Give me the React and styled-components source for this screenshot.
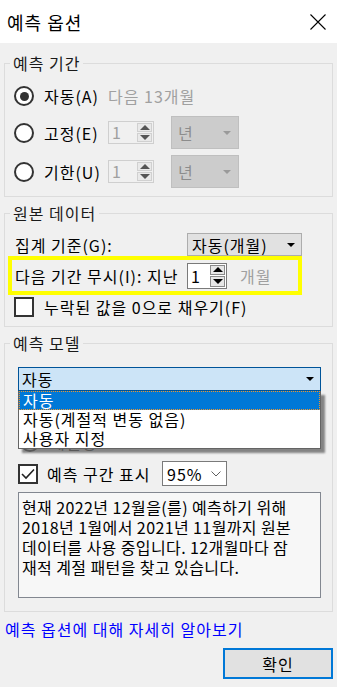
import React from 'react';
import styled, { createGlobalStyle } from 'styled-components';

const GlobalStyle = createGlobalStyle`
  html, body {
    margin: 0;
    padding: 0;
    background: #f0f0f0;
  }
  body {
    font-family: "Noto Sans CJK KR", "Noto Sans", sans-serif;
    font-size: 16px;
    letter-spacing: 1px;
    color: #000;
  }
  * {
    box-sizing: border-box;
  }
`;

const Window = styled.div`
  width: 337px;
  height: 687px;
  background: #f0f0f0;
  overflow: hidden;
`;

const TitleBar = styled.div`
  height: 43px;
  background: #fff;
  display: flex;
  align-items: center;
  justify-content: space-between;
  padding: 0 11px 0 7px;
`;

const Title = styled.div`
  font-size: 18px;
  line-height: 22px;
`;

const CloseIcon = styled.svg`
  width: 16px;
  height: 16px;
  display: block;
`;

const Body = styled.div`
  padding: 0 4px;
  display: flex;
  flex-direction: column;
`;

const Group = styled.fieldset`
  margin: ${p => p.$mt}px 0 0;
  border: 1px solid #dcdcdc;
  padding: ${p => p.$pt}px 11px ${p => p.$pb}px ${p => p.$pl}px;
  min-width: 0;
`;

const Legend = styled.legend`
  padding: 0 3px;
  margin-left: ${p => p.$ml || -4}px;
  font-size: 16px;
  line-height: 20px;
  color: #1a1a1a;
`;

const Row = styled.div`
  display: flex;
  align-items: center;
  height: ${p => p.$h}px;
  margin-top: ${p => p.$mt || 0}px;
`;

const RadioCircle = styled.span`
  width: 20px;
  height: 20px;
  border-radius: 50%;
  border: 2px solid ${p => (p.$muted ? '#a0a0a0' : '#333')};
  background: #fff;
  display: flex;
  align-items: center;
  justify-content: center;
  margin-right: 10px;
  flex: none;

  &::after {
    content: '';
    width: 9px;
    height: 9px;
    border-radius: 50%;
    background: #333;
    display: ${p => (p.$checked ? 'block' : 'none')};
  }
`;

const OptionLabel = styled.span`
  width: ${p => (p.$w ? `${p.$w}px` : 'auto')};
  flex: none;
  white-space: nowrap;
  line-height: 20px;
`;

const Muted = styled.span`
  color: #a0a0a0;
  white-space: nowrap;
  margin-left: ${p => p.$ml || 0}px;
`;

const Spin = styled.div`
  width: ${p => p.$w}px;
  height: ${p => p.$h}px;
  border: 1px solid ${p => (p.$disabled ? '#cfcfcf' : '#7a7a7a')};
  background: ${p => (p.$disabled ? '#f0f0f0' : '#fff')};
  display: flex;
  flex: none;
  margin-right: ${p => p.$mr || 0}px;
`;

const SpinValue = styled.span`
  flex: 1;
  padding-left: 3px;
  line-height: ${p => p.$h - 2}px;
  color: ${p => (p.$disabled ? '#a0a0a0' : '#000')};
`;

const SpinButtons = styled.div`
  width: 16px;
  display: flex;
  flex-direction: column;
  gap: 1px;
  padding: 1px 1px 1px 0;
`;

const SpinButton = styled.div`
  flex: 1;
  background: ${p => (p.$disabled ? '#e9e9e9' : '#e6e6e6')};
  border: 1px solid ${p => (p.$disabled ? '#d0d0d0' : '#8a8a8a')};
  display: flex;
  align-items: center;
  justify-content: center;

  &::after {
    content: '';
    width: 0;
    height: 0;
    border-left: 5px solid transparent;
    border-right: 5px solid transparent;
    ${p => (p.$up ? 'border-bottom' : 'border-top')}: 5px solid ${p => (p.$disabled ? '#555' : '#000')};
  }
`;

const Combo = styled.div`
  width: ${p => p.$w}px;
  height: ${p => p.$h}px;
  background: ${p => p.$bg};
  border: 1px solid ${p => p.$border};
  display: flex;
  align-items: center;
  justify-content: space-between;
  padding: 0 ${p => p.$pr || 6}px 0 ${p => p.$pl || 4}px;
  flex: none;
  color: ${p => p.$color || '#000'};
  white-space: nowrap;
`;

const Caret = styled.span`
  width: 0;
  height: 0;
  border-left: 4px solid transparent;
  border-right: 4px solid transparent;
  border-top: 4px solid ${p => p.$color || '#000'};
`;

const Highlight = styled.div`
  display: flex;
  align-items: center;
  width: 294px;
  height: 39px;
  margin-left: -6px;
  border: 4px solid #ffff00;
  padding-left: 3px;
`;

const CheckBox = styled.span`
  width: 20px;
  height: 20px;
  border: 2px solid #333;
  background: #fff;
  flex: none;
  margin-right: ${p => p.$mr || 10}px;
  display: flex;
  align-items: center;
  justify-content: center;
`;

const ComboWrap = styled.div`
  position: relative;
  width: 303px;
`;

const ModelCombo = styled.div`
  height: 24px;
  background: #cce4f7;
  border: 1px solid #005499;
  display: flex;
  align-items: center;
  justify-content: space-between;
  padding: 0 6px 0 3px;
`;

const DropList = styled.div`
  position: absolute;
  top: 100%;
  left: 0;
  right: 0;
  background: #fff;
  border: 1px solid #646464;
  border-top: none;
  box-shadow: 4px 4px 2px rgba(0, 0, 0, 0.45);
  z-index: 10;
`;

const DropItem = styled.div`
  height: 19px;
  line-height: 17px;
  padding-left: 3px;
  border: 1px ${p => (p.$selected ? 'dotted #f0952a' : 'solid transparent')};
  background: ${p => (p.$selected ? '#0078d7' : '#fff')};
  color: ${p => (p.$selected ? '#fff' : '#000')};
  white-space: nowrap;
`;

const Select = styled.div`
  width: 65px;
  height: 25px;
  background: #fff;
  border: 1px solid #7a7a7a;
  display: flex;
  align-items: center;
  justify-content: space-between;
  padding: 0 5px 0 4px;
  margin-left: 13px;
`;

const Summary = styled.div`
  margin-top: 6px;
  width: 303px;
  height: 106px;
  border: 1px solid #828790;
  background: #f7f7f7;
  padding: 4px 3px;
  letter-spacing: 0.4px;
`;

const SummaryLine = styled.div`
  line-height: 20px;
  white-space: nowrap;
`;

const HelpLink = styled.a`
  display: block;
  margin: 7px 0 0 1px;
  line-height: 20px;
  color: #0000ff;
  text-decoration: none;
  cursor: pointer;
`;

const Footer = styled.div`
  display: flex;
  justify-content: flex-end;
  margin-top: 9px;
`;

const OkButton = styled.button`
  width: 110px;
  height: 31px;
  border: 2px solid #0078d7;
  background: #e1e1e1;
  font-family: inherit;
  font-size: 16px;
  letter-spacing: 1px;
  color: #000;
  padding: 0;
`;

const SpinBox = ({ value, w, h, disabled, mr }) => (
  <Spin $w={w} $h={h} $disabled={disabled} $mr={mr}>
    <SpinValue $h={h} $disabled={disabled}>{value}</SpinValue>
    <SpinButtons>
      <SpinButton $up $disabled={disabled} />
      <SpinButton $disabled={disabled} />
    </SpinButtons>
  </Spin>
);

const summary = [
  '현재 2022년 12월을(를) 예측하기 위해',
  '2018년 1월에서 2021년 11월까지 원본',
  '데이터를 사용 중입니다. 12개월마다 잠',
  '재적 계절 패턴을 찾고 있습니다.',
];

const App = () => (
  <Window>
    <GlobalStyle />
    <TitleBar>
      <Title>예측 옵션</Title>
      <CloseIcon viewBox="0 0 16 16">
        <path d="M0.5 0.5 L15.5 15.5 M15.5 0.5 L0.5 15.5" stroke="#000" strokeWidth="1.1" fill="none" />
      </CloseIcon>
    </TitleBar>
    <Body>
      <Group $mt={10} $pt={8} $pb={8} $pl={9}>
        <Legend>예측 기간</Legend>
        <Row $h={30}>
          <RadioCircle $checked />
          <OptionLabel $w={64}>자동(A)</OptionLabel>
          <Muted>다음 13개월</Muted>
        </Row>
        <Row $h={33} $mt={5}>
          <RadioCircle />
          <OptionLabel $w={64}>고정(E)</OptionLabel>
          <SpinBox value="1" w={46} h={23} disabled mr={17} />
          <Combo $w={68} $h={33} $bg="#cccccc" $border="#bfbfbf" $color="#8c8c8c" $pl={6} $pr={7}>
            년<Caret $color="#9a9a9a" />
          </Combo>
        </Row>
        <Row $h={33} $mt={6}>
          <RadioCircle />
          <OptionLabel $w={64}>기한(U)</OptionLabel>
          <SpinBox value="1" w={46} h={23} disabled mr={17} />
          <Combo $w={68} $h={33} $bg="#cccccc" $border="#bfbfbf" $color="#8c8c8c" $pl={6} $pr={7}>
            년<Caret $color="#9a9a9a" />
          </Combo>
        </Row>
      </Group>

      <Group $mt={6} $pt={10} $pb={9} $pl={9}>
        <Legend>원본 데이터</Legend>
        <Row $h={23}>
          <OptionLabel $w={173} style={{ paddingLeft: 1 }}>집계 기준(G):</OptionLabel>
          <Combo $w={115} $h={23} $bg="#e1e1e1" $border="#adadad" $pl={4} $pr={6}>
            자동(개월)<Caret />
          </Combo>
        </Row>
        <Highlight>
          <OptionLabel $w={172}>다음 기간 무시(I): 지난</OptionLabel>
          <SpinBox value="1" w={40} h={26} />
          <Muted $ml={13}>개월</Muted>
        </Highlight>
        <Row $h={20} $mt={2}>
          <CheckBox />
          <OptionLabel>누락된 값을 0으로 채우기(F)</OptionLabel>
        </Row>
      </Group>

      <Group $mt={6} $pt={14} $pb={13} $pl={13}>
        <Legend $ml={-8}>예측 모델</Legend>
        <ComboWrap>
          <ModelCombo>
            자동<Caret />
          </ModelCombo>
          <DropList>
            <DropItem $selected>자동</DropItem>
            <DropItem>자동(계절적 변동 없음)</DropItem>
            <DropItem>사용자 지정</DropItem>
          </DropList>
        </ComboWrap>
        <Row $h={22} $mt={40} style={{ paddingLeft: 2 }}>
          <RadioCircle $muted />
          <Muted>계절성</Muted>
        </Row>
        <Row $h={25} $mt={8}>
          <CheckBox $mr={9}>
            <svg width="14" height="12" viewBox="0 0 14 12">
              <path d="M1 6 L5 10 L13 1.5" stroke="#222" strokeWidth="1.6" fill="none" />
            </svg>
          </CheckBox>
          <OptionLabel $w={102}>예측 구간 표시</OptionLabel>
          <Select>
            95%
            <svg width="10" height="6" viewBox="0 0 10 6">
              <path d="M0.5 0.5 L5 5 L9.5 0.5" stroke="#606060" strokeWidth="1" fill="none" />
            </svg>
          </Select>
        </Row>
        <Summary>
          {summary.map(line => (
            <SummaryLine key={line}>{line}</SummaryLine>
          ))}
        </Summary>
      </Group>

      <HelpLink>예측 옵션에 대해 자세히 알아보기</HelpLink>
      <Footer>
        <OkButton>확인</OkButton>
      </Footer>
    </Body>
  </Window>
);

export default App;
